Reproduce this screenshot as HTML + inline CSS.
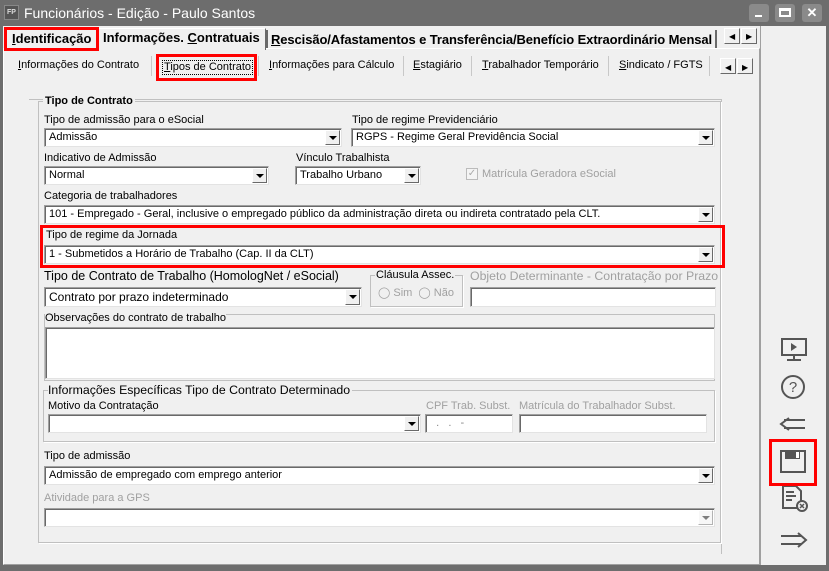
<!DOCTYPE html>
<html><head><meta charset="utf-8"><style>
*{margin:0;padding:0;box-sizing:border-box}
body{width:829px;height:571px;overflow:hidden;background:#6d6d6d;font-family:"Liberation Sans",Tahoma,sans-serif;font-size:11px;color:#000;position:relative}
.a{position:absolute}
.t{position:absolute;white-space:nowrap;font-size:11px;line-height:13px}
.g{color:#a0a0a0}
.cb{position:absolute;background:#fff;border:1px solid #a0a0a0;border-right-color:#e3e3e3;border-bottom-color:#e3e3e3;box-shadow:inset 1px 1px 0 #696969;font-size:11px;line-height:17px;padding-left:4px;white-space:nowrap;overflow:hidden}
.cb .b{position:absolute;right:1px;top:1px;bottom:1px;width:15px;background:#f0f0f0;border:1px solid #fff;border-right-color:#696969;border-bottom-color:#696969}
.cb .b:after{content:"";position:absolute;left:3px;top:5px;border-left:4px solid transparent;border-right:4px solid transparent;border-top:4px solid #000}
.red{position:absolute;border:3px solid #f00}
.sep{position:absolute;width:1px;background:#c8c8c8;top:56px;height:20px}
.grp{position:absolute;border:1px solid #c0c0c0;box-shadow:1px 1px 0 #fff}
.arr{position:absolute;width:16px;height:16px;background:#f0f0f0;border:1px solid #fff;border-right-color:#696969;border-bottom-color:#696969}
</style></head><body>
<div class="a" style="left:4px;top:5px;width:15px;height:15px;background:#555;border:1px solid #888;color:#ddd;font-size:7px;line-height:13px;text-align:center;font-weight:bold">FP</div>
<div class="t" style="left:24px;top:5px;color:#fff;font-size:14px;line-height:16px">Funcionários - Edição - Paulo Santos</div>
<div class="a" style="left:749px;top:4px;width:20px;height:18px;background:#8a8a8a;border-radius:3px"><div class="a" style="left:6px;top:11px;width:7px;height:2px;background:#fff"></div></div>
<div class="a" style="left:775px;top:4px;width:20px;height:18px;background:#8a8a8a;border-radius:3px"><div class="a" style="left:4px;top:4px;width:12px;height:9px;border:2px solid #fff;border-top-width:3px"></div></div>
<div class="a" style="left:802px;top:4px;width:20px;height:18px;background:#8a8a8a;border-radius:3px;color:#fff;font-weight:bold;font-size:13px;text-align:center;line-height:18px">✕</div>
<div class="a" style="left:3px;top:26px;width:823px;height:539px;background:#f0f0f0"></div>
<div class="a" style="left:760px;top:26px;width:66px;height:539px;background:#f0f0f0;border-left:1px solid #a0a0a0"></div>
<div class="a" style="left:3px;top:48px;width:757px;height:517px;border:1px solid #fff;border-right-color:#a0a0a0;border-bottom-color:#a0a0a0"></div>
<div class="a" style="left:98px;top:28px;width:168px;height:22px;background:#f0f0f0;border:1px solid #fff;border-bottom:none;border-right-color:#696969"></div>
<div class="t" style="left:12px;top:31px;font-size:13px;font-weight:bold;line-height:16px"><u>I</u>dentificação</div>
<div class="red" style="left:4px;top:27px;width:95px;height:24px"></div>
<div class="t" style="left:103px;top:30px;font-size:13px;font-weight:bold;line-height:16px">Informações. <u>C</u>ontratuais</div>
<div class="a" style="left:266px;top:30px;width:2px;height:18px;background:#696969"></div>
<div class="t" style="left:271px;top:32px;font-size:13px;font-weight:bold;line-height:16px;letter-spacing:-0.1px"><u>R</u>escisão/Afastamentos e Transferência/Benefício Extraordinário Mensal</div>
<div class="a" style="left:715px;top:30px;width:2px;height:18px;background:#696969"></div>
<div class="arr" style="left:724px;top:28px"></div><div class="t" style="left:729px;top:30px;font-size:8px">◀</div>
<div class="arr" style="left:741px;top:28px"></div><div class="t" style="left:746px;top:30px;font-size:8px">▶</div>
<div class="t" style="left:18px;top:59px"><u>I</u>nformações do Contrato</div>
<div class="sep" style="left:151px"></div>
<div class="t" style="left:162px;top:60px;border:1px dotted #000;padding:0 1px"><u>T</u>ipos de Contrato</div>
<div class="red" style="left:156px;top:54px;width:101px;height:27px"></div>
<div class="sep" style="left:258px"></div>
<div class="t" style="left:269px;top:59px"><u>I</u>nformações para Cálculo</div>
<div class="sep" style="left:403px"></div>
<div class="t" style="left:413px;top:59px"><u>E</u>stagiário</div>
<div class="sep" style="left:471px"></div>
<div class="t" style="left:482px;top:59px"><u>T</u>rabalhador Temporário</div>
<div class="sep" style="left:608px"></div>
<div class="t" style="left:619px;top:59px"><u>S</u>indicato / FGTS</div>
<div class="sep" style="left:709px"></div>
<div class="arr" style="left:720px;top:58px"></div><div class="t" style="left:725px;top:61px;font-size:8px">◀</div>
<div class="arr" style="left:737px;top:58px"></div><div class="t" style="left:742px;top:61px;font-size:8px">▶</div>
<div class="a" style="left:29px;top:99px;width:693px;height:455px;border-top:1px solid #c0c0c0;border-right:1px solid #c0c0c0"></div>
<div class="grp" style="left:38px;top:101px;width:683px;height:442px"></div>
<div class="t" style="left:43px;top:95px;font-weight:bold;background:#f0f0f0;padding:0 2px">Tipo de Contrato</div>

<div class="t" style="left:44px;top:114px">Tipo de admissão para o eSocial</div>
<div class="cb" style="left:44px;top:128px;width:298px;height:19px">Admissão<div class="b"></div></div>
<div class="t" style="left:352px;top:114px">Tipo de regime Previdenciário</div>
<div class="cb" style="left:351px;top:128px;width:364px;height:19px">RGPS - Regime Geral Previdência Social<div class="b"></div></div>

<div class="t" style="left:44px;top:152px">Indicativo de Admissão</div>
<div class="cb" style="left:44px;top:166px;width:225px;height:19px">Normal<div class="b"></div></div>
<div class="t" style="left:296px;top:152px">Vínculo Trabalhista</div>
<div class="cb" style="left:295px;top:166px;width:126px;height:19px">Trabalho Urbano<div class="b"></div></div>
<div class="a" style="left:466px;top:168px;width:12px;height:12px;border:1px solid #bbb;background:#f4f4f4;color:#aaa;font-size:10px;line-height:10px;text-align:center">✓</div>
<div class="t g" style="left:482px;top:168px">Matrícula Geradora eSocial</div>

<div class="t" style="left:44px;top:190px">Categoria de trabalhadores</div>
<div class="cb" style="left:44px;top:205px;width:671px;height:19px">101 - Empregado - Geral, inclusive o empregado público da administração direta ou indireta contratado pela CLT.<div class="b"></div></div>

<div class="red" style="left:40px;top:225px;width:685px;height:43px"></div>
<div class="t" style="left:46px;top:229px">Tipo de regime da Jornada</div>
<div class="cb" style="left:44px;top:245px;width:671px;height:19px">1 - Submetidos a Horário de Trabalho (Cap. II da CLT)<div class="b"></div></div>

<div class="t" style="left:44px;top:269px;font-size:12.5px;line-height:15px">Tipo de Contrato de Trabalho (HomologNet / eSocial)</div>
<div class="cb" style="left:44px;top:287px;width:318px;height:20px;font-size:12px;line-height:18px">Contrato por prazo indeterminado<div class="b"></div></div>
<div class="grp" style="left:370px;top:275px;width:93px;height:32px"></div>
<div class="t" style="left:375px;top:269px;background:#f0f0f0;padding:0 1px">Cláusula Assec.</div>
<div class="t g" style="left:378px;top:287px">◯ Sim &nbsp;◯ Não</div>
<div class="t g" style="left:470px;top:269px;font-size:12.3px;line-height:15px">Objeto Determinante - Contratação por Prazo</div>
<div class="cb" style="left:470px;top:287px;width:246px;height:20px"></div>

<div class="a" style="left:44px;top:314px;width:671px;height:67px;border:1px solid #c0c0c0"></div>
<div class="t" style="left:45px;top:312px;background:#f0f0f0">Observações do contrato de trabalho</div>
<div class="cb" style="left:45px;top:327px;width:670px;height:52px"></div>

<div class="grp" style="left:43px;top:390px;width:672px;height:52px"></div>
<div class="t" style="left:48px;top:383px;font-size:12.3px;line-height:14px;background:#f0f0f0;padding-right:2px">Informações Específicas Tipo de Contrato Determinado</div>
<div class="t" style="left:48px;top:400px">Motivo da Contratação</div>
<div class="cb" style="left:48px;top:414px;width:373px;height:19px"><div class="b"></div></div>
<div class="t g" style="left:426px;top:400px">CPF Trab. Subst.</div>
<div class="cb" style="left:425px;top:414px;width:88px;height:19px;color:#888">&nbsp; . &nbsp; . &nbsp; -</div>
<div class="t g" style="left:519px;top:400px">Matrícula do Trabalhador Subst.</div>
<div class="cb" style="left:519px;top:414px;width:188px;height:19px"></div>

<div class="t" style="left:44px;top:450px">Tipo de admissão</div>
<div class="cb" style="left:44px;top:466px;width:671px;height:19px">Admissão de empregado com emprego anterior<div class="b"></div></div>
<div class="t g" style="left:44px;top:492px">Atividade para a GPS</div>
<div class="cb" style="left:44px;top:508px;width:671px;height:19px"><div class="b" style="opacity:.5"></div></div>

<svg class="a" style="left:770px;top:330px" width="50" height="230" viewBox="0 0 50 230" fill="none" stroke="#555" stroke-width="2">
<rect x="12" y="9" width="24" height="16"/><path d="M24 25v4M17 30h14"/><path d="M21 13l6 4-6 4z" fill="#555" stroke="none"/>
<circle cx="23" cy="57" r="11"/><text x="23" y="62" font-size="15" fill="#555" stroke="none" text-anchor="middle" font-family="Liberation Sans">?</text>
<path d="M35 90H14M35 98H14M19 88l-8 6 8 6"/>
<rect x="11" y="121" width="24" height="21" fill="#f0f0f0"/><rect x="15" y="121" width="15" height="8" fill="#555" stroke="none"/><rect x="26" y="122" width="3" height="6" fill="#fff" stroke="none"/>
<path d="M13 156h13l5 5v17H13z M16 162h8M16 166h10M16 170h6"/><circle cx="32" cy="176" r="5" fill="#f0f0f0"/><path d="M30 174l4 4M34 174l-4 4" stroke-width="1.5"/>
<path d="M11 206h21M11 214h21M28 203l8 7-8 7"/>
</svg>
<div class="red" style="left:769px;top:439px;width:48px;height:47px"></div>
</body></html>
